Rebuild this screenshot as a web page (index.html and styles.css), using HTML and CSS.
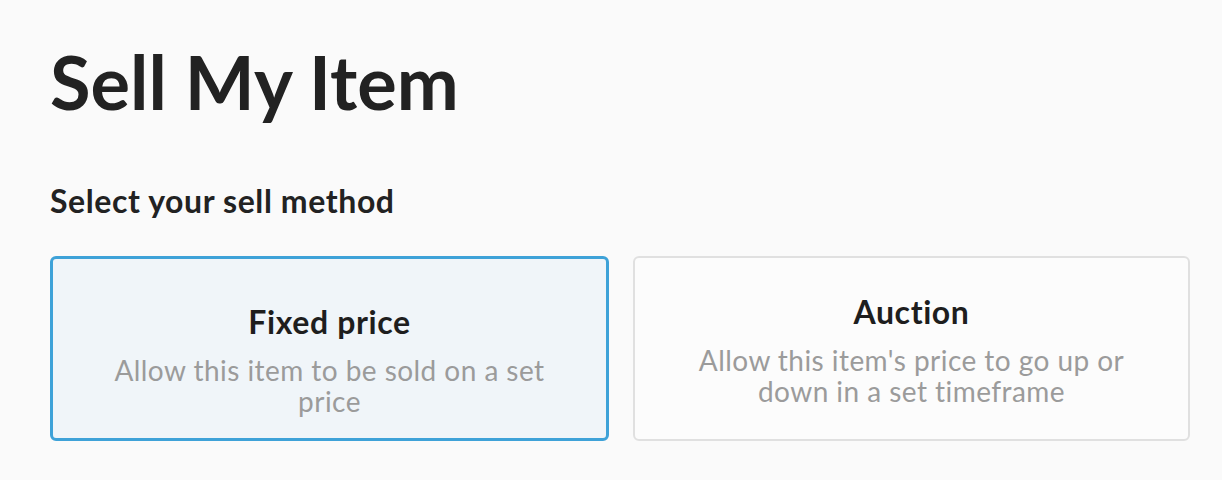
FILE: index.html
```html
<!DOCTYPE html>
<html lang="en">
<head>
<meta charset="utf-8">
<title>Sell My Item</title>
<link rel="stylesheet" href="styles.css">
</head>
<body>
<main class="page">
  <h1 class="title">Sell My Item</h1>
  <h2 class="subtitle">Select your sell method</h2>
  <div class="methods">
    <div class="method method--selected">
      <div class="method-name">Fixed price</div>
      <div class="method-desc">Allow this item to be sold on a set price</div>
    </div>
    <div class="method">
      <div class="method-name">Auction</div>
      <div class="method-desc">Allow this item's price to go up or down in a set timeframe</div>
    </div>
  </div>
</main>
</body>
</html>
```
FILE: styles.css
```css
html, body {
  margin: 0;
  padding: 0;
  background: #fafafa;
}
body {
  font-family: Lato, "Noto Sans", sans-serif;
  color: #222;
}
.page {
  padding: 36px 32px 0 50px;
}
.title {
  margin: 0;
  font-size: 74px;
  font-weight: 700;
  line-height: 92px;
}
.subtitle {
  margin: 55px 0 0 0;
  font-size: 32px;
  font-weight: 700;
  line-height: 36px;
  letter-spacing: 0.6px;
}
.methods {
  display: flex;
  gap: 24px;
  margin-top: 37px;
}
.method {
  flex: 1;
  height: 185px;
  box-sizing: border-box;
  border: 2px solid #e0e0e0;
  border-radius: 6px;
  background: #fcfcfc;
  display: flex;
  flex-direction: column;
  align-items: center;
  padding: 36px 48px 0;
  text-align: center;
}
.method--selected {
  border: 3px solid #3ea2d8;
  background: #f0f5f9;
  padding-top: 45px;
}
.method-name {
  font-size: 32px;
  font-weight: 700;
  line-height: 36px;
  letter-spacing: 0.6px;
  color: #1e1e1e;
}
.method-desc {
  margin-top: 15px;
  font-size: 28px;
  line-height: 31px;
  letter-spacing: 0.45px;
  color: #9b9b9b;
}
```
